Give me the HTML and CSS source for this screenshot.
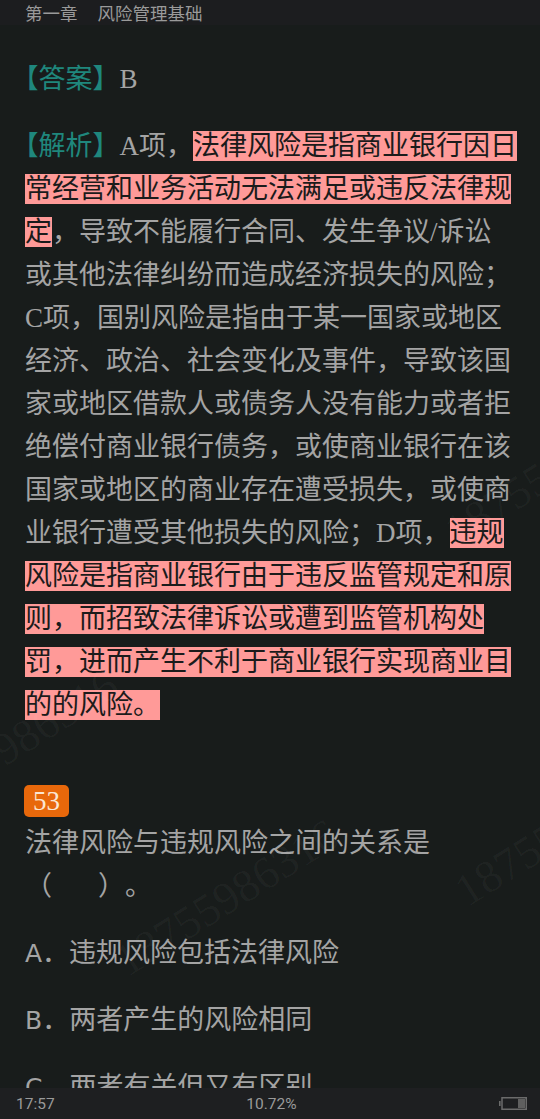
FILE: index.html
```html
<!DOCTYPE html>
<html lang="zh-CN">
<head>
<meta charset="utf-8">
<title>第一章 风险管理基础</title>
<link rel="stylesheet" href="styles.css">
</head>
<body>
<div class="screen">
  <header class="topbar">
    <span>第一章</span><span class="chapter-name">风险管理基础</span>
  </header>
  <main class="content">
    <p class="para label-para"><span class="label">【答案】</span>B</p>
    <p class="para label-para"><span class="label">【解析】</span>A项，<span class="hl">法律风险是指商业银行因日常经营和业务活动无法满足或违反法律规定</span>，导致不能履行合同、发生争议/诉讼或其他法律纠纷而造成经济损失的风险；C项，国别风险是指由于某一国家或地区经济、政治、社会变化及事件，导致该国家或地区借款人或债务人没有能力或者拒绝偿付商业银行债务，或使商业银行在该国家或地区的商业存在遭受损失，或使商业银行遭受其他损失的风险；D项，<span class="hl">违规风险是指商业银行由于违反监管规定和原则，而招致法律诉讼或遭到监管机构处罚，进而产生不利于商业银行实现商业目的的风险。</span></p>
    <div class="question">
      <div class="num-line"><span class="badge">53</span></div>
      <p class="q-text">法律风险与违规风险之间的关系是<br>（<span class="blank"></span>）。</p>
    </div>
    <p class="para option"><span class="opt-letter">A</span>．违规风险包括法律风险</p>
    <p class="para option"><span class="opt-letter">B</span>．两者产生的风险相同</p>
    <p class="para option"><span class="opt-letter">C</span>．两者有关但又有区别</p>
    <div class="wm wm1">18755986316</div>
    <div class="wm wm2">18755986316</div>
    <div class="wm wm3">18755986316</div>
    <div class="wm wm4">18755986316</div>
  </main>
  <footer class="bottombar">
    <span class="time">17:57</span>
    <span class="progress">10.72%</span>
    <span class="battery" aria-hidden="true">
      <svg width="28" height="13" viewBox="0 0 28 13">
        <rect x="0" y="4" width="1.6" height="5" fill="#6b6b6b"/>
        <rect x="3" y="0.75" width="24.25" height="11.5" fill="none" stroke="#6b6b6b" stroke-width="1.5"/>
        <rect x="19" y="2" width="7" height="9" fill="#5f5f5f"/>
      </svg>
    </span>
  </footer>
</div>
</body>
</html>
```
FILE: styles.css
```css
html, body {
  margin: 0;
  padding: 0;
  background: #181c1b;
}

.screen {
  width: 540px;
  height: 1119px;
  display: flex;
  flex-direction: column;
  overflow: hidden;
  background: #181c1b;
}

.topbar {
  flex: 0 0 25px;
  height: 25px;
  background: #1c1d1f;
  color: #9a9a9a;
  font-family: "Noto Sans CJK SC", sans-serif;
  font-size: 17.5px;
  line-height: 25px;
  padding-left: 25px;
  display: flex;
  align-items: center;
  white-space: nowrap;
}

.chapter-name {
  margin-left: 20px;
}

.content {
  flex: 1 1 auto;
  position: relative;
  overflow: hidden;
  padding: 33px 22.5px 0 25px;
  font-family: "Liberation Serif", "Noto Sans CJK SC", serif;
  font-size: 27px;
  line-height: 43px;
  color: #a4a4a4;
  text-spacing-trim: space-all;
}

.para {
  margin: 0 0 24px 0;
}

.label-para {
  text-indent: -0.5em;
}

.label {
  color: #1f877d;
}

.hl {
  background: #ff9a98;
  color: #1b1b1b;
}

.question {
  margin-top: 52px;
  margin-bottom: 24px;
}

.num-line {
  height: 43px;
  display: flex;
  align-items: center;
}

.badge {
  display: inline-block;
  height: 32px;
  line-height: 33px;
  padding: 0 9px 0 9px;
  margin-left: -1px;
  border-radius: 5px;
  background: #e8680b;
  color: #fbe6d2;
  font-family: "Liberation Serif", serif;
  font-size: 27px;
}

.q-text {
  margin: 0;
}

.blank {
  display: inline-block;
  width: 46px;
}

.opt-letter {
  font-family: "DejaVu Sans", sans-serif;
  font-size: 25px;
}

.wm {
  position: absolute;
  pointer-events: none;
  font-family: "Liberation Serif", serif;
  font-size: 46px;
  line-height: 1;
  color: rgba(255, 255, 255, 0.035);
  transform: rotate(-32deg);
  white-space: nowrap;
}

.wm1 { left: -120px; top: 700px; }
.wm2 { left: 100px; top: 850px; }
.wm3 { left: 440px; top: 780px; }
.wm4 { left: 430px; top: 420px; }

.bottombar {
  flex: 0 0 31px;
  height: 31px;
  background: #1e1f21;
  color: #9a9a9a;
  font-family: Roboto, "Noto Sans", sans-serif;
  font-size: 15.5px;
  display: grid;
  grid-template-columns: 1fr auto 1fr;
  align-items: center;
  padding: 0 13px 0 16px;
}

.time {
  justify-self: start;
}

.progress {
  justify-self: center;
}

.battery {
  justify-self: end;
  display: flex;
  align-items: center;
}
```
